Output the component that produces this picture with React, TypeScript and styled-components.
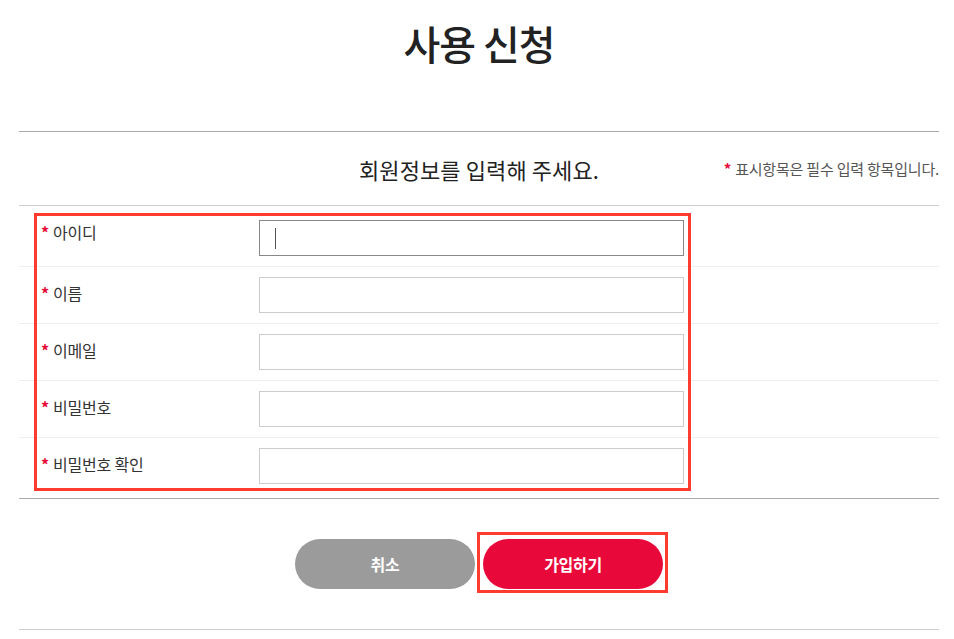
import React from "react";
import styled, { createGlobalStyle } from "styled-components";

const Global = createGlobalStyle`
  html, body { margin: 0; padding: 0; background: #fff; }
  body {
    font-family: "Noto Sans CJK KR", "Noto Sans", "Liberation Sans", sans-serif;
    color: #333;
  }
  * { box-sizing: border-box; }
`;

const Page = styled.div`
  width: 920px;
  margin-left: 19px;
`;

const Title = styled.h1`
  margin: 0;
  height: 131px;
  padding-top: 16px;
  text-align: center;
  font-size: 40px;
  line-height: 54px;
  font-weight: 500;
  color: #222;
  letter-spacing: -1px;
`;

const Header = styled.div`
  display: grid;
  grid-template-columns: 1fr auto 1fr;
  align-items: center;
  height: 74px;
  border-top: 1px solid #aaa;
`;

const Subtitle = styled.h2`
  grid-column: 2;
  margin: 0;
  font-size: 22px;
  font-weight: 400;
  color: #222;
  letter-spacing: 0.1px;
`;

const Note = styled.p`
  justify-self: end;
  align-self: center;
  margin: 0;
  font-size: 15px;
  color: #555;
  letter-spacing: -0.2px;
  white-space: nowrap;
`;

const Star = styled.span`
  color: #e60a37;
  font-weight: 700;
  margin-right: 4px;
`;

const Form = styled.div`
  position: relative;
  border-top: 1px solid #ccc;
  border-bottom: 1px solid #aaa;
`;

const Row = styled.div<{ $last?: boolean }>`
  display: flex;
  align-items: flex-start;
  padding: 10px 0 ${(p) => (p.$last ? "14px" : "10px")};
  border-bottom: ${(p) => (p.$last ? "none" : "1px solid #eee")};
`;

const Label = styled.label`
  width: 240px;
  padding-left: 22px;
  padding-top: 6px;
  font-size: 16px;
  line-height: 20px;
  color: #333;
  letter-spacing: -0.2px;
`;

const InputWrap = styled.div<{ $first?: boolean }>`
  position: relative;
  margin-top: ${(p) => (p.$first ? "4px" : "0")};
`;

const Input = styled.input<{ $focused?: boolean }>`
  display: block;
  width: 425px;
  height: 36px;
  border: 1px solid ${(p) => (p.$focused ? "#888" : "#ccc")};
  padding: 0 15px;
  font-size: 14px;
  font-family: inherit;
  outline: none;
  background: #fff;
`;

const Caret = styled.span`
  position: absolute;
  left: 16px;
  top: 8px;
  width: 1px;
  height: 21px;
  background: #555;
`;

const Highlight = styled.div`
  position: absolute;
  border: 3px solid #ff3a2f;
  pointer-events: none;
`;

const FormHighlight = styled(Highlight)`
  top: 7px;
  left: 15px;
  width: 657px;
  height: 278px;
`;

const ButtonHighlight = styled(Highlight)`
  top: -7px;
  left: -6px;
  right: -5px;
  bottom: -4px;
`;

const Actions = styled.div`
  display: flex;
  justify-content: center;
  gap: 8px;
  padding: 40px 0;
  border-bottom: 1px solid #ccc;
`;

const BtnSlot = styled.div`
  position: relative;
`;

const Button = styled.button<{ $primary?: boolean }>`
  width: 180px;
  height: 50px;
  border: none;
  border-radius: 25px;
  background: ${(p) => (p.$primary ? "#e8093a" : "#9b9b9b")};
  color: #fff;
  font-family: inherit;
  font-size: 16px;
  font-weight: 700;
  letter-spacing: -0.3px;
  cursor: pointer;
`;

const fields = ["아이디", "이름", "이메일", "비밀번호", "비밀번호 확인"];

export default function App() {
  return (
    <>
      <Global />
      <Page>
        <Title>사용 신청</Title>
        <Header>
          <Subtitle>회원정보를 입력해 주세요.</Subtitle>
          <Note>
            <Star>*</Star>표시항목은 필수 입력 항목입니다.
          </Note>
        </Header>
        <Form>
          {fields.map((f, i) => (
            <Row key={f} $last={i === fields.length - 1}>
              <Label>
                <Star>*</Star>
                {f}
              </Label>
              <InputWrap $first={i === 0}>
                <Input
                  $focused={i === 0}
                  type={f.startsWith("비밀번호") ? "password" : "text"}
                />
                {i === 0 && <Caret />}
              </InputWrap>
            </Row>
          ))}
          <FormHighlight />
        </Form>
        <Actions>
          <BtnSlot>
            <Button>취소</Button>
          </BtnSlot>
          <BtnSlot>
            <Button $primary>가입하기</Button>
            <ButtonHighlight />
          </BtnSlot>
        </Actions>
      </Page>
    </>
  );
}
